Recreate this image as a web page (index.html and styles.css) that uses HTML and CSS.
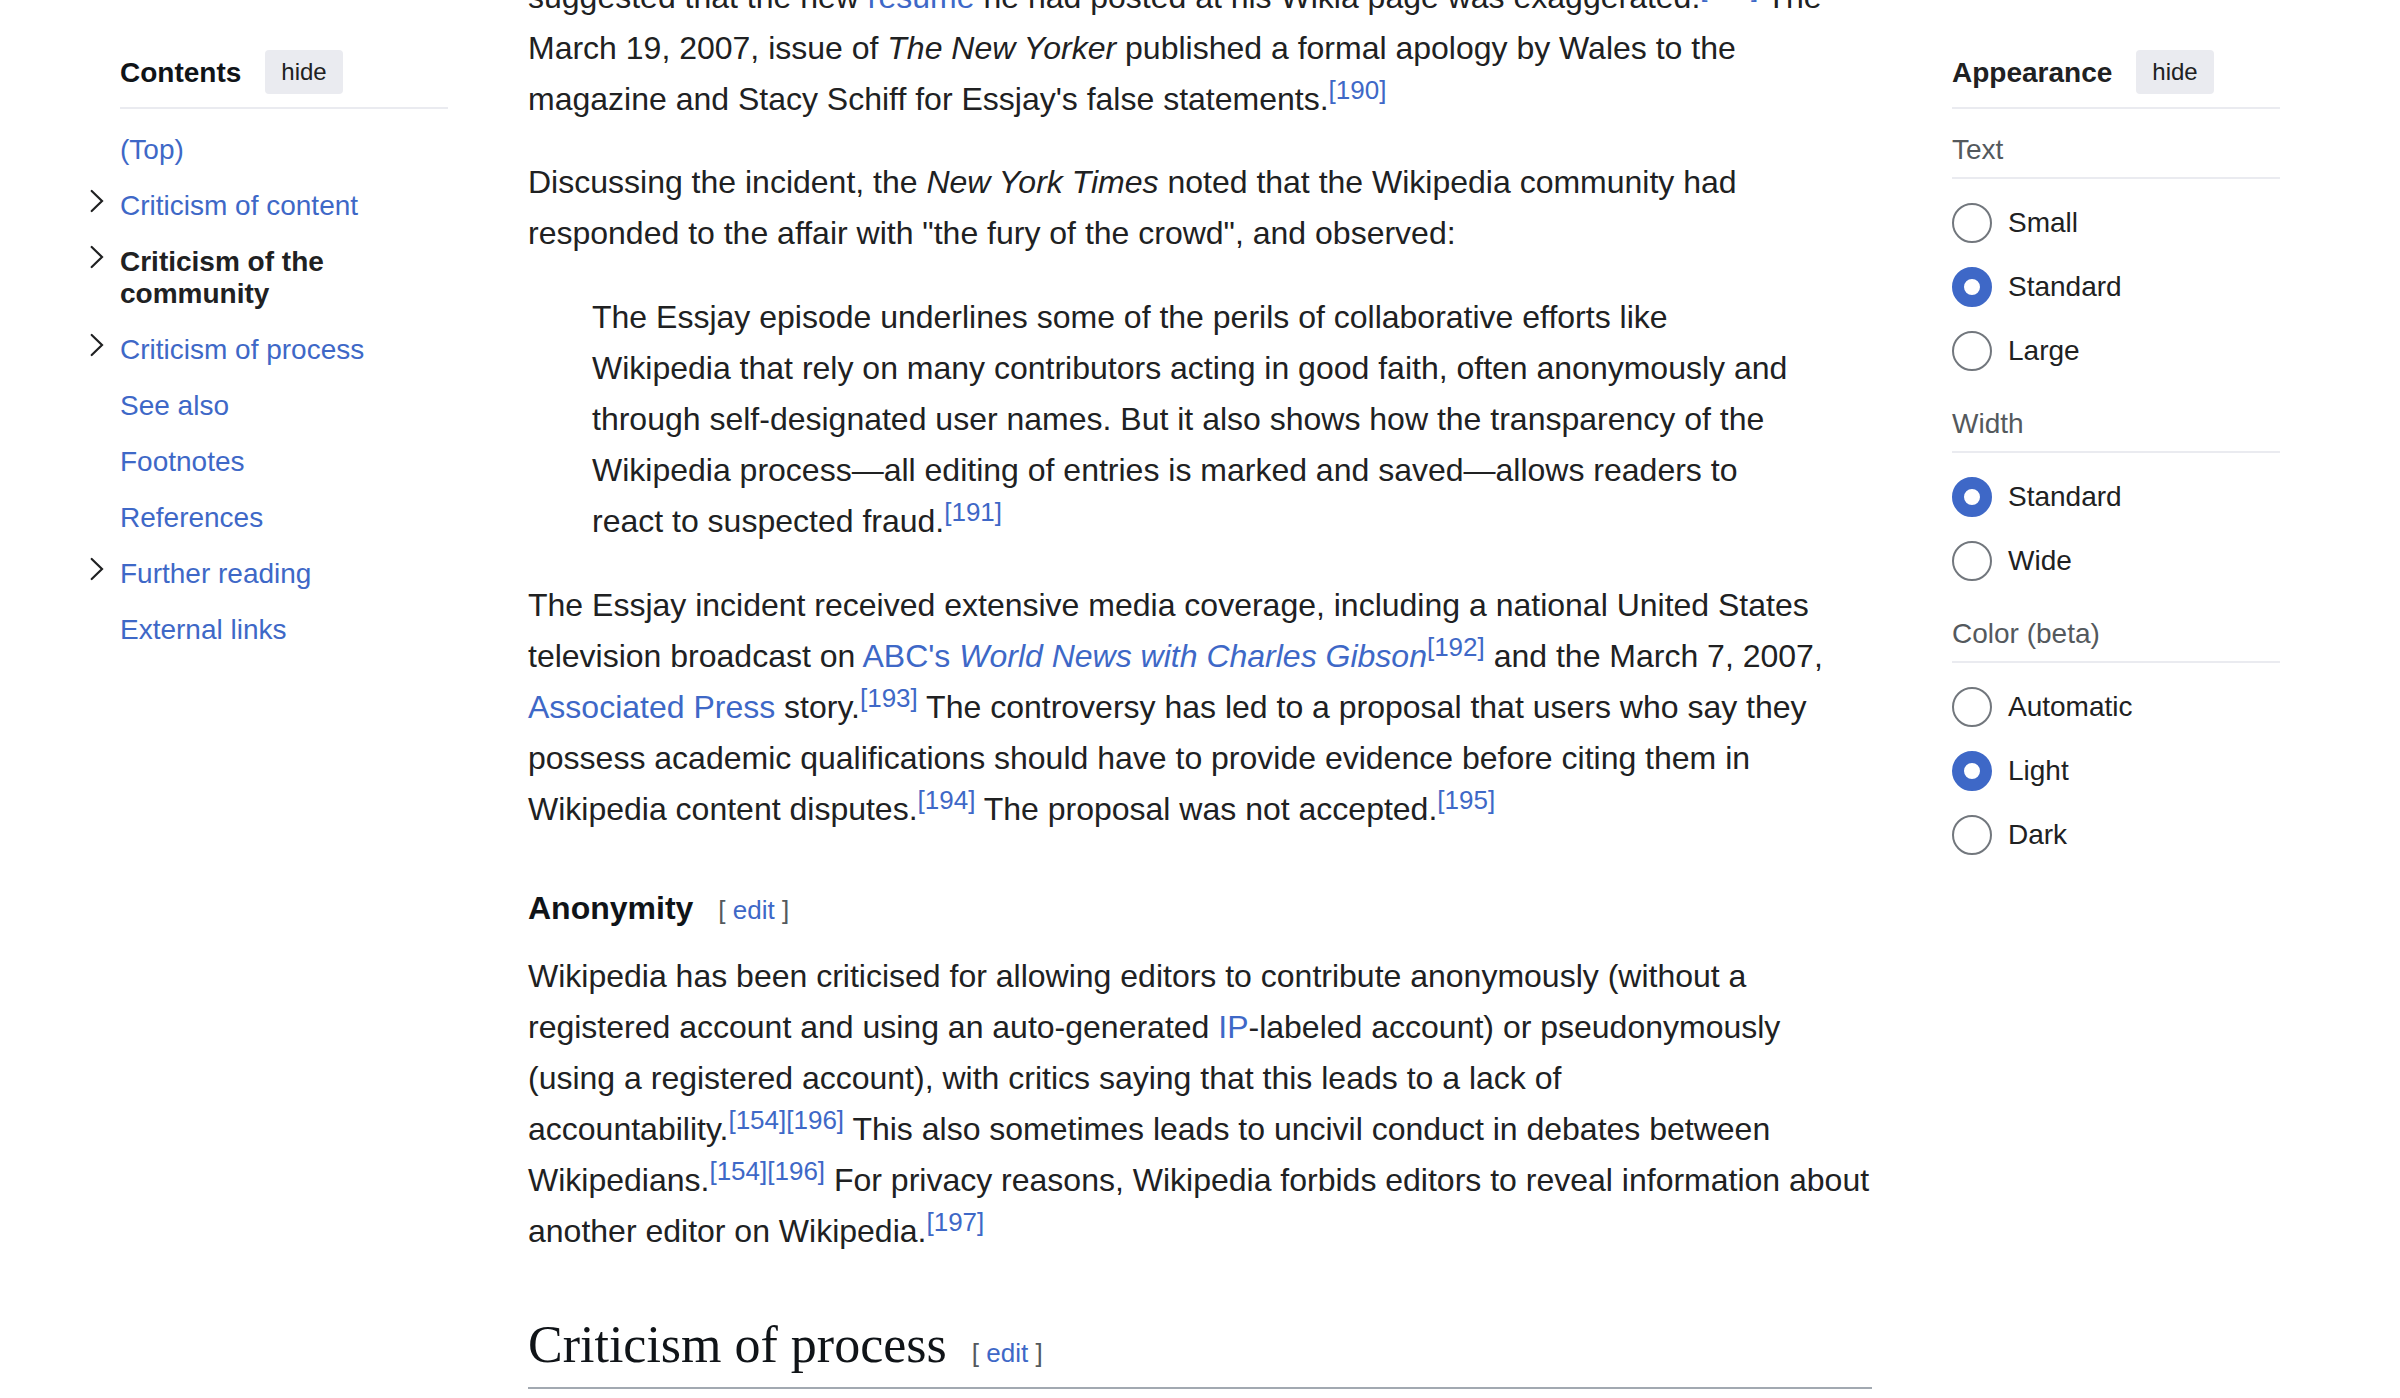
FILE: index.html
```html
<!DOCTYPE html>
<html lang="en">
<head>
<meta charset="utf-8">
<title>Criticism of Wikipedia</title>
<link rel="stylesheet" href="styles.css">
</head>
<body>
<div class="page">
  <nav class="panel" aria-labelledby="toc-title">
    <div class="panel-header">
      <h2 class="panel-title toc-title" id="toc-title">Contents</h2>
      <button type="button" class="hide-button">hide</button>
    </div>
    <ul class="toc">
      <li class="toc-item"><a href="#top">(Top)</a></li>
      <li class="toc-item"><button type="button" class="toc-toggle" aria-label="Toggle Criticism of content subsection"><svg class="chevron" viewBox="0 0 14 22"><path d="M1.7 1 12 11 1.7 21"/></svg></button><a href="#content">Criticism of content</a></li>
      <li class="toc-item"><button type="button" class="toc-toggle" aria-label="Toggle Criticism of the community subsection"><svg class="chevron" viewBox="0 0 14 22"><path d="M1.7 1 12 11 1.7 21"/></svg></button><a class="active" href="#community">Criticism of the community</a></li>
      <li class="toc-item"><button type="button" class="toc-toggle" aria-label="Toggle Criticism of process subsection"><svg class="chevron" viewBox="0 0 14 22"><path d="M1.7 1 12 11 1.7 21"/></svg></button><a href="#process">Criticism of process</a></li>
      <li class="toc-item"><a href="#see-also">See also</a></li>
      <li class="toc-item"><a href="#footnotes">Footnotes</a></li>
      <li class="toc-item"><a href="#references">References</a></li>
      <li class="toc-item"><button type="button" class="toc-toggle" aria-label="Toggle Further reading subsection"><svg class="chevron" viewBox="0 0 14 22"><path d="M1.7 1 12 11 1.7 21"/></svg></button><a href="#further-reading">Further reading</a></li>
      <li class="toc-item"><a href="#external-links">External links</a></li>
    </ul>
  </nav>

  <main class="article">
    <p class="lead">suggested that the new <a href="#resume">résumé</a> he had posted at his Wikia page was exaggerated.<sup><a href="#n189">[189]</a></sup> The March 19, 2007, issue of <i>The New Yorker</i> published a formal apology by Wales to the magazine and Stacy Schiff for Essjay's false statements.<sup><a href="#n190">[190]</a></sup></p>
    <p>Discussing the incident, the <i>New York Times</i> noted that the Wikipedia community had responded to the affair with "the fury of the crowd", and observed:</p>
    <blockquote>The Essjay episode underlines some of the perils of collaborative efforts like Wikipedia that rely on many contributors acting in good faith, often anonymously and through self-designated user names. But it also shows how the transparency of the Wikipedia process—all editing of entries is marked and saved—allows readers to react to suspected fraud.<sup><a href="#n191">[191]</a></sup></blockquote>
    <p>The Essjay incident received extensive media coverage, including a national United States television broadcast on <a href="#abc">ABC's <i>World News with Charles Gibson</i></a><sup><a href="#n192">[192]</a></sup> and the March 7, 2007, <a href="#ap">Associated Press</a> story.<sup><a href="#n193">[193]</a></sup> The controversy has led to a proposal that users who say they possess academic qualifications should have to provide evidence before citing them in Wikipedia content disputes.<sup><a href="#n194">[194]</a></sup> The proposal was not accepted.<sup><a href="#n195">[195]</a></sup></p>
    <div class="heading heading-minor">
      <h3>Anonymity</h3>
      <span class="edit">[ <a href="#edit-anonymity">edit</a> ]</span>
    </div>
    <p>Wikipedia has been criticised for allowing editors to contribute anonymously (without a registered account and using an auto-generated <a href="#ip">IP</a>-labeled account) or pseudonymously (using a registered account), with critics saying that this leads to a lack of <span class="cited">accountability.<sup><a href="#n154">[154]</a><a href="#n196">[196]</a></sup></span> This also sometimes leads to uncivil conduct in debates between <span class="cited">Wikipedians.<sup><a href="#n154">[154]</a><a href="#n196">[196]</a></sup></span> For privacy reasons, Wikipedia forbids editors to reveal information about another editor on Wikipedia.<sup><a href="#n197">[197]</a></sup></p>
    <div class="heading heading-major">
      <h2>Criticism of process</h2>
      <span class="edit">[ <a href="#edit-process">edit</a> ]</span>
    </div>
  </main>

  <aside class="panel" aria-labelledby="appearance-title">
    <div class="panel-header">
      <h2 class="panel-title" id="appearance-title">Appearance</h2>
      <button type="button" class="hide-button">hide</button>
    </div>
    <form>
      <div class="option-group" role="radiogroup" aria-labelledby="g-text">
        <h3 class="option-title" id="g-text">Text</h3>
        <div class="options">
          <label class="option"><input type="radio" name="text">Small</label>
          <label class="option"><input type="radio" name="text" checked>Standard</label>
          <label class="option"><input type="radio" name="text">Large</label>
        </div>
      </div>
      <div class="option-group" role="radiogroup" aria-labelledby="g-width">
        <h3 class="option-title" id="g-width">Width</h3>
        <div class="options">
          <label class="option"><input type="radio" name="width" checked>Standard</label>
          <label class="option"><input type="radio" name="width">Wide</label>
        </div>
      </div>
      <div class="option-group" role="radiogroup" aria-labelledby="g-color">
        <h3 class="option-title" id="g-color">Color (beta)</h3>
        <div class="options">
          <label class="option"><input type="radio" name="color">Automatic</label>
          <label class="option"><input type="radio" name="color" checked>Light</label>
          <label class="option"><input type="radio" name="color">Dark</label>
        </div>
      </div>
    </form>
  </aside>
</div>
</body>
</html>
```
FILE: styles.css
```css
:root {
  --text: #202122;
  --heading: #101418;
  --muted: #54595d;
  --link: #3e68c7;
  --line: #eaebf0;
  --control: #72777d;
}

* {
  box-sizing: border-box;
}

body {
  margin: 0;
  background: #fff;
  color: var(--text);
  font-family: "Liberation Sans", Arial, sans-serif;
  font-size: 28px;
  line-height: 32px;
}

h2,
h3,
p,
ul,
blockquote {
  margin: 0;
  padding: 0;
}

a {
  color: var(--link);
  text-decoration: none;
}

a:hover {
  text-decoration: underline;
}

button {
  border: 0;
  font-family: inherit;
  color: inherit;
  cursor: pointer;
}

.page {
  display: grid;
  grid-template-columns: 328px minmax(0, 1fr) 328px;
  gap: 80px;
  padding: 0 120px;
  overflow: hidden;
}

/* Side panels */
.panel {
  padding-top: 50px;
}

.panel-header {
  display: flex;
  align-items: center;
  gap: 24px;
  padding-bottom: 13px;
  border-bottom: 2px solid var(--line);
}

.panel-title {
  padding-top: 2px;
  font-size: 28px;
  line-height: 32px;
}

.toc-title {
  color: var(--heading);
}

.hide-button {
  height: 44px;
  padding: 0 16px;
  border-radius: 4px;
  background: var(--line);
  font-size: 24px;
}

/* Table of contents: toggles hang in the left gutter */
.toc {
  display: flex;
  flex-direction: column;
  gap: 24px;
  margin: 25px 0 0 -32px;
  list-style: none;
}

.toc-item {
  display: grid;
  grid-template-columns: 32px 1fr;
  align-items: start;
}

.toc-item a {
  grid-column: 2;
}

.toc-item .active {
  color: var(--text);
  font-weight: bold;
}

.toc-toggle {
  display: flex;
  height: 24px;
  padding: 0 2px;
  background: none;
}

.chevron {
  width: 14px;
  height: 22px;
  overflow: visible;
  fill: none;
  stroke: var(--text);
  stroke-width: 2.2;
  stroke-linecap: round;
}

/* Appearance options */
.option-group {
  padding: 25px 0 12px;
}

.option-title {
  padding-bottom: 11px;
  border-bottom: 2px solid var(--line);
  color: var(--muted);
  font-size: 28px;
  font-weight: normal;
  line-height: 32px;
}

.options {
  display: flex;
  flex-direction: column;
  gap: 24px;
  padding-top: 24px;
}

.option {
  display: flex;
  align-items: center;
  gap: 16px;
}

.option input {
  appearance: none;
  width: 40px;
  height: 40px;
  margin: 0;
  border: 2px solid var(--control);
  border-radius: 50%;
  background: #fff;
}

.option input:checked {
  border: 12px solid var(--link);
}

/* Article */
.article {
  margin-top: -28px;
  font-size: 32px;
  line-height: 51px;
}

.article p,
.article blockquote {
  margin-bottom: 33px;
}

.article .lead {
  margin-bottom: 32px;
}

.article blockquote {
  padding: 0 64px;
}

.article sup {
  font-size: 26px;
  line-height: 0;
  vertical-align: 11px;
}

/* Keeps a word on the same line as its citations */
.cited {
  white-space: nowrap;
}

.heading {
  display: flex;
  align-items: baseline;
  gap: 25px;
  color: var(--heading);
}

.heading-minor {
  margin: 48px 0 17px;
}

.heading-minor h3 {
  font-size: 32px;
  line-height: 51px;
}

.heading-major {
  margin-top: 56px;
  padding-bottom: 10px;
  border-bottom: 2px solid #a2a9b1;
}

.heading-major h2 {
  font-family: "Liberation Serif", Georgia, serif;
  font-size: 52px;
  font-weight: normal;
  line-height: 64px;
}

.edit {
  color: var(--muted);
  font-size: 26px;
  line-height: 32px;
}
```
